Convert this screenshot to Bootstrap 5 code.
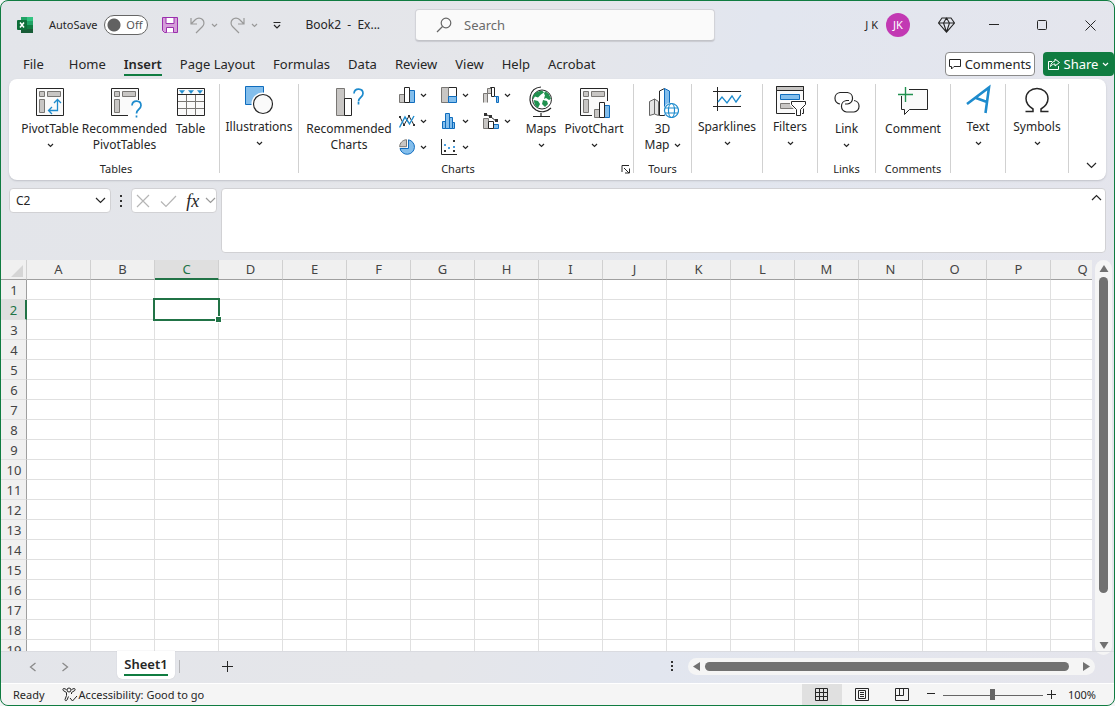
<!DOCTYPE html>
<html lang="en">
<head>
<meta charset="utf-8">
<meta name="viewport" content="width=device-width, initial-scale=1">
<title>Book2 - Excel</title>
<link href="https://cdn.jsdelivr.net/npm/bootstrap@5.3.0/dist/css/bootstrap.min.css" rel="stylesheet">
<style>
:root{--green:#107c41;--sel:#217346;--ink:#262626}
body{font-family:"Noto Sans","Open Sans",sans-serif;font-size:12px;line-height:16px;color:var(--ink);background:#f4f4f6}
.app-window{border:1px solid var(--green);border-radius:8px;background:linear-gradient(100deg,#e3e5ea 0%,#e5e6ea 45%,#e2e6ef 62%,#e5e5ec 100%)}
svg{display:block;flex:none;fill:none;stroke:var(--ink);stroke-width:1}
.btn{--bs-btn-padding-x:0;--bs-btn-padding-y:0;--bs-btn-font-size:12px;--bs-btn-line-height:16px;--bs-btn-color:var(--ink);--bs-btn-border-width:0;--bs-btn-border-radius:4px}
.titlebar{height:48px}
.title-left{flex:0 0 414px;padding-left:16px}
.autosave-label{font-size:11px;margin:0 7px 0 16px}
.autosave-switch{width:44px;height:20px;margin-right:14px}
.autosave-switch input{appearance:none;width:44px;height:20px;border:1px solid #666;border-radius:10px;background:#fff radial-gradient(circle at 9px 9px,#616161 6px,#fff 7px) no-repeat;margin:0;display:block}
.autosave-switch span{right:6px;top:2px;color:#555;pointer-events:none;font-size:11px}
.history-btn{display:flex;align-items:center;gap:6px;margin-left:12px}
.muted-line{stroke:#999}
.qat-more{margin:0 24px 0 15px}
.doc-title{white-space:pre;font-size:12px}
.search-box{flex:0 1 300px;height:32px;border:1px solid #d2d3d8;border-bottom-color:#c2c3c8;border-radius:4px;background:#fafafa;box-shadow:0 1px 1px #c9cad0;padding-left:20px}
.search-box input{background:transparent;border:0;font-size:13px;color:#444;outline:0;margin-left:12px;padding:0;min-width:0}
.search-box input::placeholder{color:#6a6a6a;opacity:1}
.avatar{width:24px;height:24px;background:#c239b3;color:#fff;font-size:11px;margin-right:12px}
.user-name{font-size:11px}
.win-btn{width:48px;height:30px;display:flex;align-items:center;justify-content:center}
.menu-row{height:30px;padding-left:13px;font-size:13px}
.menu-row .nav-link{color:var(--ink);padding:6px 9px 0;line-height:18px;height:30px}
.menu-row .nav-link.first-tab{margin-right:7px}
.menu-row .nav-link.active{font-weight:600}
.menu-row .nav-link.active span{border-bottom:2px solid var(--green);display:block;height:21px}
.comments-btn{height:24px;border:1px solid #8a8a8a!important;width:90px;background:#fff!important;font-size:13px}
.share-btn{height:24px;width:71px;background:var(--green)!important;color:#fff!important;font-size:13px}
.share-btn svg{stroke:#fff}
.menu-actions{padding-top:3px}
.ribbon{height:101px;margin:0 8px;background:#fff;border-radius:8px;box-shadow:0 1px 2px #bfc1c8;padding-top:5px}
.rgroup{height:89px;border-right:1px solid #d1d1d1;flex:none}
.rgroup-foot{margin-bottom:-5px}
.rgroup-title{height:18px;line-height:18px;font-size:11px;text-align:center}
.rbtn{display:flex;flex-direction:column;align-items:center;justify-content:flex-start;text-align:center;white-space:nowrap;padding-top:2px}
.rbtn.lean{padding-top:0;width:100%}
.rbtn>svg:first-child{margin-bottom:3px}
.caret-line{height:16px;display:flex;align-items:center}
.g-tables{width:211px;padding:0 6px 0 10px}.g-illus{width:79px}.g-charts{width:335px;padding-left:4px}.g-58{width:58px}.g-71{width:71px}.g-55{width:55px}.g-75{width:75px}.g-63{width:63px}
.b-pivot{width:62px}.b-recp{width:87px}.b-table{width:45px}.b-recc{width:92px}.b-maps{width:40px}.b-pchart{width:66px}
.mini-charts{display:grid;grid-template-columns:repeat(3,42px);grid-auto-rows:26px;height:71px;align-content:start}
.mini-charts .btn{display:flex;align-items:center;gap:4px;padding-left:4px;height:22px}
.launcher{padding:0 2px 0 8px}
.fbar{height:65px;margin:8px 8px 7px}
.fbox{height:25px;border:1px solid #d1d1d4;border-radius:4px;background:#fff}
.name-box{width:102px}
.name-box input{border:0;outline:0;width:74px;padding:0 0 0 6px;background:transparent;font-size:12px;color:var(--ink)}
.fx-box{width:86px}
.fx-sign{font:italic 18px "Liberation Serif",serif;line-height:20px}
.formula-wrap{margin-left:4px}
.formula-wrap textarea{resize:none;width:100%;height:65px;border:1px solid #d1d1d4;border-radius:4px;background:#fff;display:block;padding:4px 24px 4px 6px;outline:0}
.formula-wrap .btn{right:4px;top:6px}
.sheet-area{min-height:0}
.grid-view{background:#fff;min-width:0}
.cells{table-layout:fixed;border-collapse:separate;border-spacing:0;font-size:13px}
.cells th{background:#f0f0f0;font-weight:400;text-align:center;vertical-align:top;color:#444;padding:0;line-height:18px;height:20px}
.cells thead th{border-bottom:1px solid #9f9f9f;border-right:1px solid #d0d0d0}
.cells tbody th{border-right:1px solid #9f9f9f;border-bottom:1px solid #e0e0e0;padding:1px 0 0 1px}
.cells td{height:20px;padding:0;border-right:1px solid #e0e0e0;border-bottom:1px solid #e0e0e0}
.cells thead th.on{background:#dfdfdf;color:var(--sel);border-bottom:2px solid var(--sel)}
.cells tbody th.on{background:#dfdfdf;color:var(--sel);border-right:2px solid var(--sel)}
.cells td.cur{position:relative}
.cells td.cur::before{content:"";position:absolute;inset:-2px;border:2px solid var(--sel)}
.cells td.cur::after{content:"";position:absolute;right:-4px;bottom:-4px;width:7px;height:7px;background:var(--sel);border:1px solid #fff}
.corner svg{margin:5px 0 0 10px}
.bar-v{width:17px;margin:0 2px -4px 3px;border-radius:9px;background:#f5f5f5;padding:5px 0 6px}
.bar-v i{width:9px;border-radius:5px;background:#717171;flex:0 1 316px;margin-top:5px}
.bar-h{height:17px;width:407px;border-radius:9px;background:#f5f5f5;padding:0 5px;margin-right:19px}
.bar-h i{height:9px;border-radius:5px;background:#717171;flex:1;margin:0 14px 0 5px}
.solid{fill:#717171;stroke:none}
.sheetbar{height:32px;border-top:1px solid #dadbe0;padding-bottom:2px}
.sheet-prev{margin-left:28px}.sheet-next{margin-left:24px}.sheet-add{margin-left:42px}.sheet-dots{margin-right:15px}
.sheet-tab{width:58px;height:28px;margin:-1px 0 0 48px;background:#fff;border-radius:0 0 5px 5px;font-weight:600;font-size:13px;box-shadow:0 0 1px #b5b5bd}
.sheet-tab span{display:inline-block;border-bottom:2px solid var(--green);line-height:18px;height:21px}
.statusbar{height:22px;background:#f5f5f5;border-top:1px solid #fff;font-size:11px;border-radius:0 0 8px 8px;padding:0 18px 0 12px}
.access-btn{font-size:11px;margin-left:17px;gap:1px}
.view-btn{width:40px;height:21px;border-radius:0!important;display:flex;align-items:center;justify-content:center}
.view-btn.on{background:#e0e0e0}
.zoom-range{appearance:none;width:100px;height:12px;margin:0;background:linear-gradient(#666,#666) 0 6px/100% 1px no-repeat}
.zoom-range::-webkit-slider-thumb{appearance:none;width:5px;height:11px;background:#666;border:0}
</style>
</head>
<body>
<svg width="0" height="0" class="position-absolute" aria-hidden="true">
  <symbol id="dn" viewBox="0 0 7 5"><path d="M1 1l2.500 2.500L6 1" stroke-width="1.200"/></symbol>
  <symbol id="dnL" viewBox="0 0 11 7"><path d="M1 1l4.500 4.500L10 1" stroke-width="1.200"/></symbol>
</svg>
<div class="app-window d-flex flex-column vh-100 overflow-hidden">
  <header class="titlebar d-flex align-items-center flex-shrink-0">
    <div class="title-left d-flex align-items-center">
      <svg width="16" height="16" viewBox="0 0 16 16"><g stroke="none"><path d="M4 0h6v4H4z" fill="#21a366"/><path d="M10 0h6v4h-6z" fill="#33c481"/><path d="M4 4h6v4H4z" fill="#107c41"/><path d="M10 4h6v4h-6z" fill="#21a366"/><path d="M4 8h6v8H4z" fill="#185c37"/><path d="M10 8h6v4h-6z" fill="#107c41"/><path d="M10 12h6v4h-6z" fill="#185c37"/><rect x="0" y="3" width="10" height="10" rx="1" fill="#0e6e39"/></g><path d="M3 5.500l4 5M7 5.500l-4 5" stroke="#fff" stroke-width="1.500"/></svg>
      <label for="autosave" class="autosave-label">AutoSave</label>
      <div class="autosave-switch position-relative"><input type="checkbox" role="switch" id="autosave"><span class="position-absolute">Off</span></div>
      <button class="btn" aria-label="Save"><svg width="16" height="16" viewBox="0 0 16 16"><path d="M.5.500h15v15h-13l-2-2z" fill="#d59ed9" stroke="#9b2fae"/><path d="M4 .5h8v6H4z" fill="#fff" stroke="#9b2fae"/><path d="M4.500 15.500v-5h7v5" fill="#fff" stroke="#9b2fae"/></svg></button>
      <button class="btn history-btn" aria-label="Undo"><svg class="muted-line" width="15" height="17" viewBox="0 0 15 17"><path d="M1 1v6h6M1 7l4.500-4.500a4.800 4.800 0 0 1 7 7L6 16" stroke-width="1.200"/></svg><svg class="muted-line" width="7" height="5"><use href="#dn"/></svg></button>
      <button class="btn history-btn" aria-label="Redo"><svg class="muted-line" width="15" height="17" viewBox="0 0 15 17"><path d="M14 1v6H8M14 7L9.500 2.500a4.800 4.800 0 0 0-7 7L9 16" stroke-width="1.200"/></svg><svg class="muted-line" width="7" height="5"><use href="#dn"/></svg></button>
      <button class="btn qat-more" aria-label="Customize Quick Access Toolbar"><svg width="8" height="7" viewBox="0 0 8 7"><path d="M.5.500h7M1 3l3 3 3-3" stroke-width="1.200"/></svg></button>
      <span class="doc-title">Book2  -  Ex...</span>
    </div>
    <div class="search-box d-flex align-items-center">
      <svg width="16" height="16" viewBox="0 0 16 16"><g stroke="#666" stroke-width="1.200"><circle cx="10" cy="6" r="4.800"/><path d="M6.500 9.500L1 15"/></g></svg>
      <input type="search" placeholder="Search" aria-label="Search" class="flex-fill">
    </div>
    <div class="d-flex align-items-center ms-auto">
      <span class="user-name me-2">J K</span>
      <span class="avatar rounded-circle d-flex align-items-center justify-content-center">JK</span>
      <button class="btn win-btn" aria-label="Premium"><svg width="17" height="16" viewBox="0 0 17 16"><path d="M4 1h9l3.500 5L8.500 15.200.500 6zM.5 6h16M8.500 1L5.500 6l3 9 3-9z" stroke-width="1.100"/></svg></button>
      <button class="btn win-btn" aria-label="Minimize"><svg width="10" height="10"><path d="M0 4.500h10"/></svg></button>
      <button class="btn win-btn" aria-label="Maximize"><svg width="10" height="10"><rect x=".5" y=".5" width="9" height="9" rx="1"/></svg></button>
      <button class="btn win-btn" aria-label="Close"><svg width="11" height="11"><path d="M.5.500l10 10M10.500.500l-10 10"/></svg></button>
    </div>
  </header>

  <div class="menu-row d-flex flex-shrink-0">
    <nav class="nav flex-nowrap" aria-label="Ribbon tabs">
      <a class="nav-link first-tab" href="#">File</a><a class="nav-link" href="#">Home</a><a class="nav-link active" aria-current="page" href="#"><span>Insert</span></a><a class="nav-link text-nowrap" href="#">Page Layout</a><a class="nav-link" href="#">Formulas</a><a class="nav-link" href="#">Data</a><a class="nav-link" href="#">Review</a><a class="nav-link" href="#">View</a><a class="nav-link" href="#">Help</a><a class="nav-link" href="#">Acrobat</a>
    </nav>
    <div class="menu-actions ms-auto d-flex gap-2">
      <button class="btn comments-btn d-flex align-items-center justify-content-center gap-1"><svg width="12" height="12" viewBox="0 0 12 12"><path d="M.5 1.500h11v7H5l-2.500 2.500V8.500h-2z"/></svg>Comments</button>
      <button class="btn share-btn d-flex align-items-center justify-content-center gap-1"><svg width="12" height="12" viewBox="0 0 12 12"><path d="M4 3.500H.5v8h10V8M7 1l4.500 3.500L7 8V6C5 6 3.500 7 2.500 8.500 2.800 5.500 4.500 3.500 7 3z"/></svg>Share<svg width="7" height="5"><use href="#dn"/></svg></button>
    </div>
  </div>

  <section class="ribbon d-flex flex-shrink-0" aria-label="Insert ribbon">
    <div class="rgroup g-tables d-flex flex-column">
      <div class="d-flex flex-fill">
        <button class="btn rbtn b-pivot"><svg width="32" height="32"><path d="M2.500 2.500h27v27h-27z" fill="#fafafa"/><path d="M5.500 5.500h5v5h-5zM13.500 5.500h13v5h-13zM5.500 13.500h5v13h-5z" fill="#c8c6c4" stroke="#797774"/><path d="M23.500 13.500v11H15M20 17l3.500-3.500L27 17M18 21l-3.500 3.500L18 28" stroke="#1e8bcd" stroke-width="1.300"/></svg>PivotTable<span class="caret-line"><svg width="7" height="5"><use href="#dn"/></svg></span></button>
        <button class="btn rbtn b-recp"><svg width="36" height="32"><path d="M21 29.500H4.500v-27h27V14" fill="#fafafa"/><path d="M7.500 5.500h5v5h-5zM15.500 5.500h13v5h-13zM7.500 13.500h5v13h-5z" fill="#c8c6c4" stroke="#797774"/><path d="M25 19.500c.5-6 9-5.500 9 0 0 4-4.500 3.500-4.500 8M29.500 29.500v2" stroke="#1e8bcd" stroke-width="1.700"/></svg>Recommended<br>PivotTables</button>
        <button class="btn rbtn b-table"><svg width="32" height="32"><path d="M2.500 2.500h27v27h-27z" fill="#fafafa"/><path d="M11.500 8.500v21M20.500 8.500v21M3 15.500h26M3 22.500h26" stroke="#797774"/><path d="M2.500 8.500h27"/><path d="M4.500 4.500h5l-2.500 3zM13.500 4.500h5l-2.500 3zM22.500 4.500h5l-2.500 3z" fill="#1e8bcd" stroke="#1e8bcd" stroke-width=".5"/></svg>Table</button>
      </div>
      <div class="rgroup-foot rgroup-title">Tables</div>
    </div>
    <div class="rgroup g-illus">
      <button class="btn rbtn lean"><svg width="32" height="32"><path d="M2.500 2.500h18v18h-18z" fill="#83beec" stroke="#0f6cbd"/><circle cx="20" cy="20" r="11.500" fill="#fff" stroke="none"/><circle cx="20" cy="20" r="9.500" fill="#fafafa" stroke-width="1.200"/></svg>Illustrations<span class="caret-line"><svg width="7" height="5"><use href="#dn"/></svg></span></button>
    </div>
    <div class="rgroup g-charts d-flex flex-column">
      <div class="d-flex flex-fill">
        <button class="btn rbtn b-recc"><svg width="32" height="32"><path d="M3.500 2.500h8v27h-8z" fill="#c8c6c4" stroke="#797774"/><path d="M11.500 12.500h7v17h-7z" fill="#fff"/><path d="M21 7.500c.5-6 9-5.500 9 0 0 4-4.500 3.500-4.500 8M25.500 16v2.500" stroke="#1e8bcd" stroke-width="1.700"/></svg>Recommended<br>Charts</button>
        <div class="mini-charts">
          <button class="btn" aria-label="Column chart"><svg width="17" height="16"><path d="M.5 7.500h5v8h-5z" fill="#c8c6c4" stroke="#797774"/><path d="M10.500 3.500h5v12h-5z" fill="#83beec" stroke="#0f6cbd"/><path d="M5.500.500h5v15h-5z" fill="#fff"/></svg><svg width="7" height="5"><use href="#dn"/></svg></button>
          <button class="btn" aria-label="Hierarchy chart"><svg width="17" height="16"><path d="M7.500.500h8v9h-8z" fill="#fff"/><path d="M.5.500h7v15h-7z" fill="#c8c6c4" stroke="#797774"/><path d="M7.500 9.500h8v6h-8z" fill="#83beec" stroke="#0f6cbd"/></svg><svg width="7" height="5"><use href="#dn"/></svg></button>
          <button class="btn" aria-label="Waterfall chart"><svg width="17" height="16"><path d="M.5 15.500v-9h4v9M4.500 6.500v-5h4v5z" fill="#d0cecc" stroke="#797774"/><path d="M7.500 1V.500h4v9h-3v-9" fill="#fff"/><path d="M11.500 9.500h4v6h-2v-6z" fill="#83beec" stroke="#0f6cbd"/></svg><svg width="7" height="5"><use href="#dn"/></svg></button>
          <button class="btn" aria-label="Line chart"><svg width="17" height="16"><path d="M1 4l4 8 5-9 5 9"/><path d="M.5 14.500L6 4l4.500 7L15 3" stroke="#1e8bcd" stroke-width="1.400"/><path d="M0 3h2v2H0zM4 11h2v2H4zM9 2h2v2H9zM14 11h2v2h-2z" fill="#333" stroke="none"/></svg><svg width="7" height="5"><use href="#dn"/></svg></button>
          <button class="btn" aria-label="Histogram"><svg width="17" height="16"><path d="M1.500 15.500v-7h3v7zM4.500 15.500V.500h4v15zM8.500 15.500v-11h3v11zM11.500 15.500v-6h2v6z" fill="#83beec" stroke="#0f6cbd"/></svg><svg width="7" height="5"><use href="#dn"/></svg></button>
          <button class="btn" aria-label="Combo chart"><svg width="17" height="16"><path d="M.5 5.500h5v10h-5z" fill="#c8c6c4" stroke="#797774"/><path d="M10.500 11.500h5v4h-5z" fill="#83beec" stroke="#0f6cbd"/><path d="M5.500 8.500h5v7h-5z" fill="#fff"/><path d="M2 1l6 3 5 4"/><path d="M1 0h3v3H1zM6 2h3v3H6zM12 6h3v3h-3z" fill="#333" stroke="none"/></svg><svg width="7" height="5"><use href="#dn"/></svg></button>
          <button class="btn" aria-label="Pie chart"><svg width="17" height="16"><path d="M9.500.800A7.300 7.300 0 1 1 1 9.500h8.500z" fill="#83beec" stroke="#0f6cbd"/><path d="M7.500.700v7H.600C.800 4 3.500 1 7.500.700z" fill="#c8c6c4" stroke="#797774"/></svg><svg width="7" height="5"><use href="#dn"/></svg></button>
          <button class="btn" aria-label="Scatter chart"><svg width="17" height="16"><path d="M.5 0v15.500H16"/><path d="M3 11h2v2H3zM12 1h2v2h-2zM12 11h2v2h-2z" fill="#333" stroke="none"/><path d="M3 5h2v2H3zM7 8h2v2H7zM12 7h2v2h-2z" fill="#4a9fe0" stroke="none"/></svg><svg width="7" height="5"><use href="#dn"/></svg></button>
        </div>
        <button class="btn rbtn b-maps"><svg width="32" height="32"><circle cx="17" cy="13.500" r="9.500" fill="#fff"/><path d="M13 5.500l4-1 2 2-3 2-3 3-3-1-2 3c-1-4 2-7 5-8zM9 14l4 1 2 3-2 4c-3-2-4-4-4-8zM20 5l4 3 2 5-2 1-3-2-2 1 1-4-1-1zM18 14l4 1 1 3-3 3-3-3z" fill="#219150" stroke="none"/><path d="M16 1C4 2 1 17 11 24c5 3 11 2 15-2M16 27v3M8 30.500h17" stroke-width="1.200"/></svg>Maps<span class="caret-line"><svg width="7" height="5"><use href="#dn"/></svg></span></button>
        <button class="btn rbtn b-pchart"><svg width="32" height="32"><path d="M14 29.500H2.500v-27h27V15" fill="#fafafa"/><path d="M5.500 5.500h5v5h-5zM13.500 5.500h13v5h-13zM5.500 13.500h5v13h-5z" fill="#c8c6c4" stroke="#797774"/><path d="M16.500 23.500h5v8h-5z" fill="#c8c6c4" stroke="#797774"/><path d="M26.500 19.500h5v12h-5z" fill="#83beec" stroke="#0f6cbd"/><path d="M21.500 16.500h5v15h-5z" fill="#fff"/></svg>PivotChart<span class="caret-line"><svg width="7" height="5"><use href="#dn"/></svg></span></button>
      </div>
      <div class="rgroup-foot d-flex align-items-center"><div class="rgroup-title flex-fill">Charts</div><button class="btn launcher" aria-label="Chart settings"><svg width="10" height="9" viewBox="0 0 10 9"><path d="M1 7V.5h7M3 3l5 5M8.500 3.500V8H4"/></svg></button></div>
    </div>
    <div class="rgroup g-58 d-flex flex-column">
      <button class="btn rbtn flex-fill"><svg width="32" height="32"><path d="M2.500 15.500l5-2.500 4 2.500v14l-4-1.500-5 1.500zM7.500 13v15" fill="#e5e5e5" stroke="#666"/><path d="M12.500 5l5-2.500v27h-5z" fill="#fff"/><path d="M17.500 2.500l5 2.500v24h-5z" fill="#83beec" stroke="#0f6cbd"/><circle cx="24.500" cy="24.500" r="8" fill="#fff" stroke="none"/><g stroke="#1e8bcd" stroke-width="1.200"><circle cx="24.500" cy="24.500" r="7"/><ellipse cx="24.500" cy="24.500" rx="3" ry="7"/><path d="M18 22h13M18 27h13"/></g></svg>3D<span class="d-flex align-items-center gap-1">Map <svg width="7" height="5"><use href="#dn"/></svg></span></button>
      <div class="rgroup-foot rgroup-title">Tours</div>
    </div>
    <div class="rgroup g-71">
      <button class="btn rbtn lean"><svg width="32" height="32"><path d="M2 7.500h28M2 22.500h28M6.500 3v24"/><path d="M7 18l4-5 5 6 5-7 4 6 5-7" stroke="#1e8bcd" stroke-width="1.300"/></svg>Sparklines<span class="caret-line"><svg width="7" height="5"><use href="#dn"/></svg></span></button>
    </div>
    <div class="rgroup g-55">
      <button class="btn rbtn lean"><svg width="32" height="32"><path d="M2.500 2.500h27v27h-27z" fill="#fafafa"/><path d="M2.500 2.500h27v4h-27z" fill="#c8c6c4"/><path d="M6.500 10.500h19v5h-19z" fill="#83beec" stroke="#0f6cbd"/><path d="M6.500 19.500h13v5h-13z" fill="#c8c6c4" stroke="#797774"/><path d="M17.500 17.500h14v3l-5 5v6h-4v-6l-5-5z" fill="#fff" stroke="#fff" stroke-width="3"/><path d="M17.500 17.500h14v3l-5 5v6h-4v-6l-5-5z" fill="#fff"/></svg>Filters<span class="caret-line"><svg width="7" height="5"><use href="#dn"/></svg></span></button>
    </div>
    <div class="rgroup g-58 d-flex flex-column">
      <button class="btn rbtn flex-fill"><svg width="32" height="32"><path d="M9 18a5.800 5.800 0 0 1 0-11.500h7.500a5.800 5.800 0 0 1 0 11.500H14M18 14.500h-2.500a5.800 5.800 0 0 0 0 11.500H23a5.800 5.800 0 0 0 0-11.500" stroke-width="1.200"/></svg>Link<span class="caret-line"><svg width="7" height="5"><use href="#dn"/></svg></span></button>
      <div class="rgroup-foot rgroup-title">Links</div>
    </div>
    <div class="rgroup g-75 d-flex flex-column">
      <button class="btn rbtn flex-fill"><svg width="32" height="32"><path d="M4.500 10v13.500h3v5l5-5h18v-20H12" fill="#fafafa"/><path d="M1 8.500h15M8.500 1v15" stroke="#219150" stroke-width="1.400"/></svg>Comment</button>
      <div class="rgroup-foot rgroup-title">Comments</div>
    </div>
    <div class="rgroup g-55">
      <button class="btn rbtn lean"><svg width="32" height="32"><path d="M5 20L27 3.500 23.500 29M14 14l11 4" stroke="#1e8bcd" stroke-width="2.600"/></svg>Text<span class="caret-line"><svg width="7" height="5"><use href="#dn"/></svg></span></button>
    </div>
    <div class="rgroup g-63">
      <button class="btn rbtn lean"><svg width="32" height="32"><path d="M4.500 27.500h7.500V25C7 22 5 19 5 14.500 5 8.500 10 4.500 16 4.500s11 4 11 10c0 4.500-2 7.500-7 10.500v2.500h7.500" stroke-width="1.500"/></svg>Symbols<span class="caret-line"><svg width="7" height="5"><use href="#dn"/></svg></span></button>
    </div>
    <button class="btn ms-auto align-self-end pe-2 pb-2" aria-label="Ribbon display options"><svg width="13" height="11" viewBox="0 0 13 11"><use href="#dnL" x="1" y="1" width="11" height="7"/></svg></button>
  </section>

  <div class="fbar d-flex flex-shrink-0 align-items-start">
    <div class="fbox name-box d-flex align-items-center justify-content-between pe-1"><input value="C2" aria-label="Name box"><button class="btn" aria-label="Names"><svg width="11" height="7"><use href="#dnL"/></svg></button></div>
    <svg width="20" height="25"><path d="M9 7h2v2H9zM9 12h2v2H9zM9 17h2v2H9z" fill="#333" stroke="none"/></svg>
    <div class="fbox fx-box d-flex align-items-center justify-content-between ps-1">
      <button class="btn" aria-label="Cancel"><svg width="14" height="14"><path d="M1 1l12 12M13 1L1 13" stroke="#b5b5b5" stroke-width="1.200"/></svg></button>
      <button class="btn ms-1" aria-label="Enter"><svg width="17" height="14"><path d="M1 7.500L6 12.500 16 2" stroke="#b5b5b5" stroke-width="1.200"/></svg></button>
      <button class="btn fx-sign ms-1" aria-label="Insert function">fx</button>
      <button class="btn" aria-label="Functions"><svg class="muted-line" width="11" height="7"><use href="#dnL"/></svg></button>
    </div>
    <div class="formula-wrap flex-fill position-relative"><textarea aria-label="Formula bar"></textarea><button class="btn position-absolute" aria-label="Collapse formula bar"><svg width="11" height="7" viewBox="0 0 11 7"><path d="M1 6l4.500-4.500L10 6" stroke-width="1.200"/></svg></button></div>
  </div>

  <main class="sheet-area d-flex flex-fill">
    <div class="grid-view flex-fill overflow-hidden" id="view"><table class="cells" id="cells"></table></div>
    <div class="bar-v d-flex flex-column align-items-center flex-shrink-0">
      <svg class="solid" width="10" height="7"><path d="M5 0l4.500 7h-9z"/></svg><i></i>
      <svg class="solid mt-auto" width="10" height="7"><path d="M5 7L.5 0h9z"/></svg>
    </div>
  </main>

  <div class="sheetbar d-flex align-items-center flex-shrink-0">
    <button class="btn sheet-prev" aria-label="Previous sheet"><svg width="8" height="10"><path d="M6.500 1l-5 4 5 4" stroke="#8a8a8a" stroke-width="1.300"/></svg></button>
    <button class="btn sheet-next" aria-label="Next sheet"><svg width="8" height="10"><path d="M1.500 1l5 4-5 4" stroke="#8a8a8a" stroke-width="1.300"/></svg></button>
    <button class="btn sheet-tab align-self-start"><span>Sheet1</span></button>
    <span class="vr my-2 ms-1"></span>
    <button class="btn sheet-add" aria-label="New sheet"><svg width="11" height="11"><path d="M0 5.500h11M5.500 0v11"/></svg></button>
    <svg class="sheet-dots ms-auto" width="2" height="11"><path d="M0 0h2v2H0zM0 4h2v2H0zM0 8h2v2H0z" fill="#333" stroke="none"/></svg>
    <div class="bar-h d-flex align-items-center"><svg class="solid" width="7" height="9"><path d="M0 4.500L7 0v9z"/></svg><i></i><svg class="solid" width="7" height="9"><path d="M7 4.500L0 0v9z"/></svg></div>
  </div>

  <footer class="statusbar d-flex align-items-center flex-shrink-0">
    <span>Ready</span>
    <button class="btn access-btn d-flex align-items-center"><svg width="16" height="15"><circle cx="7" cy="3" r="2"/><path d="M4.500 2.500L2 1.500C.5 1.500.500 3.500 2 4l2.500 1.500v3L3 12.500c0 1.500 1.500 1.500 2 .5L6.500 9.500M9.500 2.500L12 1.500c1.500 0 1.500 2 0 2.500L9.500 5.500V7M8 11l2.500 3L15 9"/></svg>Accessibility: Good to go</button>
    <div class="d-flex align-items-center ms-auto">
      <button class="btn view-btn on" aria-label="Normal view"><svg width="13" height="13"><path d="M.5.500h12v12H.5zM4.500 0v13M8.500 0v13M0 4.500h13M0 8.500h13"/></svg></button>
      <button class="btn view-btn" aria-label="Page layout view"><svg width="14" height="13"><path d="M.5.500h13v12H.5zM3.500 2.500h7v8h-7zM5 4.500h4M5 6.500h4M5 8.500h4"/></svg></button>
      <button class="btn view-btn" aria-label="Page break view"><svg width="14" height="13"><path d="M.5.500h13v12H.5zM.5 7.500h8v-7M4.500.500v7"/></svg></button>
      <button class="btn p-1" aria-label="Zoom out"><svg width="9" height="9"><path d="M1 3.500h8"/></svg></button>
      <input type="range" class="zoom-range ms-1" min="0" max="100" value="50" aria-label="Zoom">
      <button class="btn p-1" aria-label="Zoom in"><svg width="9" height="9"><path d="M0 4.500h9M4.500 0v9"/></svg></button>
      <span class="ms-2">100%</span>
    </div>
  </footer>
</div>
<script>
// Fill the visible grid with as many columns and rows as the window shows
function fillGrid(){
  const view=document.getElementById('view'),t=document.getElementById('cells');
  t.innerHTML='';
  const cols=Math.min(26,Math.ceil((view.clientWidth-26)/64)),rows=Math.ceil((view.clientHeight-20)/20);
  let h='<colgroup><col style="width:26px">'+'<col style="width:64px">'.repeat(cols)+'</colgroup><thead><tr><th class="corner" aria-label="Select all"><svg width="12" height="12"><path d="M12 0v12H0z" fill="#d5d5d5" stroke="none"/></svg></th>';
  for(let c=0;c<cols;c++)h+=`<th scope="col"${c===2?' class="on"':''}>${String.fromCharCode(65+c)}</th>`;
  h+='</tr></thead><tbody>';
  for(let r=1;r<=rows;r++){
    h+=`<tr><th scope="row"${r===2?' class="on"':''}>${r}</th>`;
    for(let c=0;c<cols;c++)h+=r===2&&c===2?'<td class="cur"></td>':'<td></td>';
    h+='</tr>';
  }
  t.style.width=26+64*cols+'px';
  t.innerHTML=h+'</tbody>';
}
fillGrid();
addEventListener('resize',fillGrid);
</script>
<script src="https://cdn.jsdelivr.net/npm/bootstrap@5.3.0/dist/js/bootstrap.bundle.min.js"></script>
</body>
</html>
